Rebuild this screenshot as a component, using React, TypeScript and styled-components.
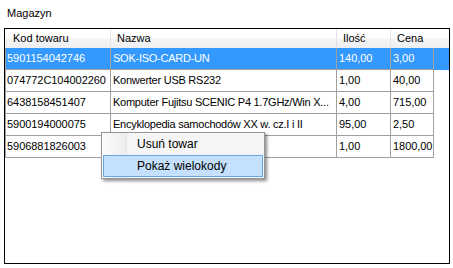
import React from "react";
import styled, { createGlobalStyle } from "styled-components";

const Global = createGlobalStyle`
  html, body { margin: 0; padding: 0; background: #ffffff; }
  body {
    font-family: "Liberation Sans", Arial, sans-serif;
    font-size: 11px;
    color: #000000;
  }
`;

const Page = styled.div`
  width: 453px;
  height: 268px;
  box-sizing: border-box;
  padding: 7px 0 0 4px;
  overflow: hidden;
`;

const GroupLabel = styled.div`
  margin-left: 3px;
  height: 13px;
  line-height: 13px;
`;

const GridBox = styled.div`
  position: relative;
  margin-top: 8px;
  width: 446px;
  height: 236px;
  box-sizing: border-box;
  border: 1px solid #000000;
  background: #ffffff;
`;

const HeaderRow = styled.div`
  display: grid;
  grid-template-columns: 106px 226px 54px 1fr;
  height: 19px;
  background: linear-gradient(#ffffff 0%, #ffffff 48%, #f3f4f5 52%, #eeeff1 100%);
`;

const HeaderCell = styled.div<{ $first?: boolean; $last?: boolean }>`
  box-sizing: border-box;
  height: 19px;
  line-height: 19px;
  padding-left: ${(p) => (p.$first ? "8px" : "6px")};
  border-right: ${(p) => (p.$last ? "none" : "1px solid #e2e3e4")};
  white-space: nowrap;
  overflow: hidden;
`;

const Row = styled.div`
  display: grid;
  grid-template-columns: 106px 226px 54px 43px 1fr;
  height: 22px;
`;

const Cell = styled.div<{ $selected?: boolean; $first?: boolean; $text?: boolean }>`
  box-sizing: border-box;
  height: 22px;
  line-height: 21px;
  padding-left: ${(p) => (p.$first ? "1px" : "2px")};
  letter-spacing: ${(p) => (p.$text ? "-0.25px" : "-0.05px")};
  border-bottom: 1px solid #a0a0a0;
  border-right: 1px solid #a0a0a0;
  border-left: ${(p) => (p.$first ? "1px solid #a0a0a0" : "none")};
  background: ${(p) => (p.$selected ? "#3399ff" : "#ffffff")};
  color: ${(p) => (p.$selected ? "#ffffff" : "#000000")};
  white-space: nowrap;
  overflow: hidden;
`;

const Filler = styled.div<{ $selected?: boolean }>`
  height: 22px;
  background: ${(p) => (p.$selected ? "#3399ff" : "transparent")};
`;

const Menu = styled.div`
  position: absolute;
  left: 96px;
  top: 103px;
  width: 164px;
  box-sizing: border-box;
  padding: 0 1px 1px 1px;
  border: 1px solid #979797;
  background: #f5f5f5;
  box-shadow: 2px 2px 3px rgba(0, 0, 0, 0.45);
  font-size: 12px;
  &::before {
    content: "";
    position: absolute;
    left: 0;
    top: 0;
    bottom: 0;
    width: 24px;
    background: linear-gradient(to right, #fcfcfc, #f3f3f3 60%, #ececec);
  }
  &::after {
    content: "";
    position: absolute;
    left: 24px;
    top: 0;
    bottom: 0;
    width: 1px;
    background: #e6e6e6;
  }
`;

const MenuItem = styled.div<{ $active?: boolean }>`
  position: relative;
  z-index: 1;
  height: 22px;
  box-sizing: border-box;
  line-height: 20px;
  padding-left: 33px;
  border: 1px solid ${(p) => (p.$active ? "#66a7e8" : "transparent")};
  background: ${(p) => (p.$active ? "#c4e0fc" : "transparent")};
  white-space: nowrap;
`;

type Item = { code: string; name: string; qty: string; price: string; selected?: boolean };

const items: Item[] = [
  { code: "5901154042746", name: "SOK-ISO-CARD-UN", qty: "140,00", price: "3,00", selected: true },
  { code: "074772C104002260", name: "Konwerter USB RS232", qty: "1,00", price: "40,00" },
  { code: "6438158451407", name: "Komputer Fujitsu SCENIC P4 1.7GHz/Win X...", qty: "4,00", price: "715,00" },
  { code: "5900194000075", name: "Encyklopedia samochodów XX w. cz.I i II", qty: "95,00", price: "2,50" },
  { code: "5906881826003", name: "", qty: "1,00", price: "1800,00" },
];

export default function App() {
  return (
    <>
      <Global />
      <Page>
        <GroupLabel>Magazyn</GroupLabel>
        <GridBox>
          <HeaderRow>
            <HeaderCell $first>Kod towaru</HeaderCell>
            <HeaderCell>Nazwa</HeaderCell>
            <HeaderCell>Ilość</HeaderCell>
            <HeaderCell $last>Cena</HeaderCell>
          </HeaderRow>
          {items.map((it) => (
            <Row key={it.code}>
              <Cell $first $selected={it.selected}>{it.code}</Cell>
              <Cell $text $selected={it.selected}>{it.name}</Cell>
              <Cell $selected={it.selected}>{it.qty}</Cell>
              <Cell $selected={it.selected}>{it.price}</Cell>
              <Filler $selected={it.selected} />
            </Row>
          ))}
          <Menu>
            <MenuItem>Usuń towar</MenuItem>
            <MenuItem $active>Pokaż wielokody</MenuItem>
          </Menu>
        </GridBox>
      </Page>
    </>
  );
}
